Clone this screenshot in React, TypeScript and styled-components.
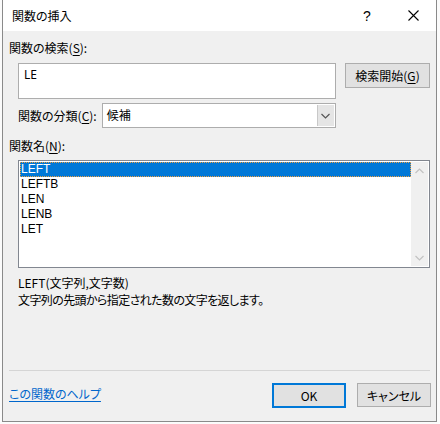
import React from "react";
import styled, { createGlobalStyle } from "styled-components";

const Global = createGlobalStyle`
  html, body { margin: 0; padding: 0; background: #fbfbfb; }
  body {
    font-family: "Noto Sans CJK JP", "Noto Sans", sans-serif;
    font-size: 12px;
    color: #000;
    font-feature-settings: "palt";
  }
  * { box-sizing: border-box; }
`;

const Page = styled.div`
  width: 440px;
  height: 424px;
  padding-left: 2px;
  overflow: hidden;
`;

const Dialog = styled.div`
  width: 435px;
  height: 422px;
  border: 1px solid #8a8a8a;
  border-top: none;
  display: flex;
  flex-direction: column;
  background: #f0f0f0;
`;

const TitleBar = styled.div`
  height: 31px;
  background: #fff;
  display: flex;
  align-items: center;
  padding-left: 9px;
`;

const Title = styled.div`
  flex: 1;
  font-size: 12px;
  line-height: 16px;
  padding-top: 1px;
`;

const TitleButton = styled.div<{ $w: number }>`
  width: ${(p) => p.$w}px;
  height: 31px;
  display: flex;
  align-items: center;
  justify-content: center;
  font-family: "Liberation Sans", sans-serif;
  font-size: 14px;
`;

const Body = styled.div`
  flex: 1;
  display: flex;
  flex-direction: column;
  padding: 9px 5px 0 6px;
`;

const Label = styled.div<{ $top?: number }>`
  height: 15px;
  line-height: 15px;
  margin-top: ${(p) => p.$top ?? 0}px;
  white-space: nowrap;
`;

const U = styled.span`
  text-decoration: underline;
  text-underline-offset: 2px;
`;

const SearchRow = styled.div`
  display: flex;
  align-items: flex-start;
  gap: 9px;
  margin-top: 8px;
  padding-left: 9px;
`;

const SearchBox = styled.div`
  width: 318px;
  height: 36px;
  background: #fff;
  border: 1px solid #adadad;
  padding: 3px 0 0 5px;
  line-height: 15px;
  font-family: "Noto Sans", sans-serif;
`;

const Button = styled.div<{ $primary?: boolean; $w: number; $h: number }>`
  width: ${(p) => p.$w}px;
  height: ${(p) => p.$h}px;
  background: #e1e1e1;
  border: ${(p) => (p.$primary ? "2px solid #0078d7" : "1px solid #adadad")};
  display: flex;
  align-items: center;
  justify-content: center;
  white-space: nowrap;
`;

const CategoryRow = styled.div`
  display: flex;
  align-items: center;
  margin-top: 4px;
  padding-left: 9px;
  gap: 5px;
`;

const Select = styled.div`
  width: 234px;
  height: 25px;
  background: #fff;
  border: 1px solid #adadad;
  display: flex;
  align-items: stretch;
`;

const SelectValue = styled.div`
  flex: 1;
  padding-left: 4px;
  line-height: 22px;
`;

const SelectArrow = styled.div`
  width: 17px;
  background: #e5e5e5;
  border-left: 1px solid #c8c8c8;
  display: flex;
  align-items: center;
  justify-content: center;
  margin: 1px 1px 1px 0;
`;

const ListBox = styled.div`
  margin: 7px 0 0 9px;
  width: 412px;
  height: 108px;
  background: #fff;
  border: 1px solid #828790;
  display: flex;
  padding: 1px;
`;

const Items = styled.div`
  flex: 1;
  display: flex;
  flex-direction: column;
`;

const Item = styled.div<{ $sel?: boolean }>`
  height: 15px;
  line-height: 15px;
  padding-left: 1px;
  font-family: "Liberation Sans", sans-serif;
  font-size: 12px;
  background: ${(p) => (p.$sel ? "#0078d7" : "transparent")};
  color: ${(p) => (p.$sel ? "#fff" : "#000")};
  outline: ${(p) => (p.$sel ? "1px dotted #f0a040" : "none")};
  outline-offset: -1px;
`;

const ScrollBar = styled.div`
  width: 17px;
  background: #f0f0f0;
  display: flex;
  flex-direction: column;
  justify-content: space-between;
  align-items: center;
  padding: 6px 0 5px;
`;

const Desc = styled.div`
  margin-top: 7px;
  padding-left: 9px;
  display: flex;
  flex-direction: column;
  gap: 2px;
`;

const DescLine = styled.div<{ $tight?: boolean }>`
  line-height: 15px;
  letter-spacing: ${(p) => (p.$tight ? "-0.6px" : "0")};
`;

const Spacer = styled.div`
  flex: 1;
`;

const Separator = styled.div`
  height: 1px;
  background: #d5d5d5;
  margin-right: 1px;
`;

const Footer = styled.div`
  display: flex;
  align-items: center;
  height: 50px;
  padding-bottom: 2px;
  gap: 11px;
`;

const HelpLink = styled.a`
  flex: 1;
  color: #0066cc;
  text-decoration: underline;
  text-underline-offset: 2px;
  margin-top: -4px;
`;

const Chevron = ({ up, color }: { up?: boolean; color: string }) => (
  <svg width="9" height="6" viewBox="0 0 9 6">
    <path
      d={up ? "M0.5 5 L4.5 1 L8.5 5" : "M0.5 1 L4.5 5 L8.5 1"}
      fill="none"
      stroke={color}
      strokeWidth="1.2"
    />
  </svg>
);

export default function App() {
  const items = ["LEFT", "LEFTB", "LEN", "LENB", "LET"];
  return (
    <Page>
      <Global />
      <Dialog>
        <TitleBar>
          <Title>関数の挿入</Title>
          <TitleButton $w={46}>?</TitleButton>
          <TitleButton $w={46}>
            <svg width="11" height="11" viewBox="0 0 11 11">
              <path d="M0.5 0.5 L10.5 10.5 M10.5 0.5 L0.5 10.5" stroke="#000" strokeWidth="1.1" />
            </svg>
          </TitleButton>
        </TitleBar>
        <Body>
          <Label>
            関数の検索(<U>S</U>):
          </Label>
          <SearchRow>
            <SearchBox>LE</SearchBox>
            <Button $w={85} $h={25}>
              検索開始(<U>G</U>)
            </Button>
          </SearchRow>
          <CategoryRow>
            <Label>
              関数の分類(<U>C</U>):
            </Label>
            <Select>
              <SelectValue>候補</SelectValue>
              <SelectArrow>
                <Chevron color="#555" />
              </SelectArrow>
            </Select>
          </CategoryRow>
          <Label $top={10}>
            関数名(<U>N</U>):
          </Label>
          <ListBox>
            <Items>
              {items.map((it, i) => (
                <Item key={it} $sel={i === 0}>
                  {it}
                </Item>
              ))}
            </Items>
            <ScrollBar>
              <Chevron up color="#c2c2c2" />
              <Chevron color="#c2c2c2" />
            </ScrollBar>
          </ListBox>
          <Desc>
            <DescLine>LEFT(文字列,文字数)</DescLine>
            <DescLine $tight>文字列の先頭から指定された数の文字を返します。</DescLine>
          </Desc>
          <Spacer />
          <Separator />
          <Footer>
            <HelpLink>この関数のヘルプ</HelpLink>
            <Button $primary $w={74} $h={25}>
              OK
            </Button>
            <Button $w={74} $h={24}>
              キャンセル
            </Button>
          </Footer>
        </Body>
      </Dialog>
    </Page>
  );
}
